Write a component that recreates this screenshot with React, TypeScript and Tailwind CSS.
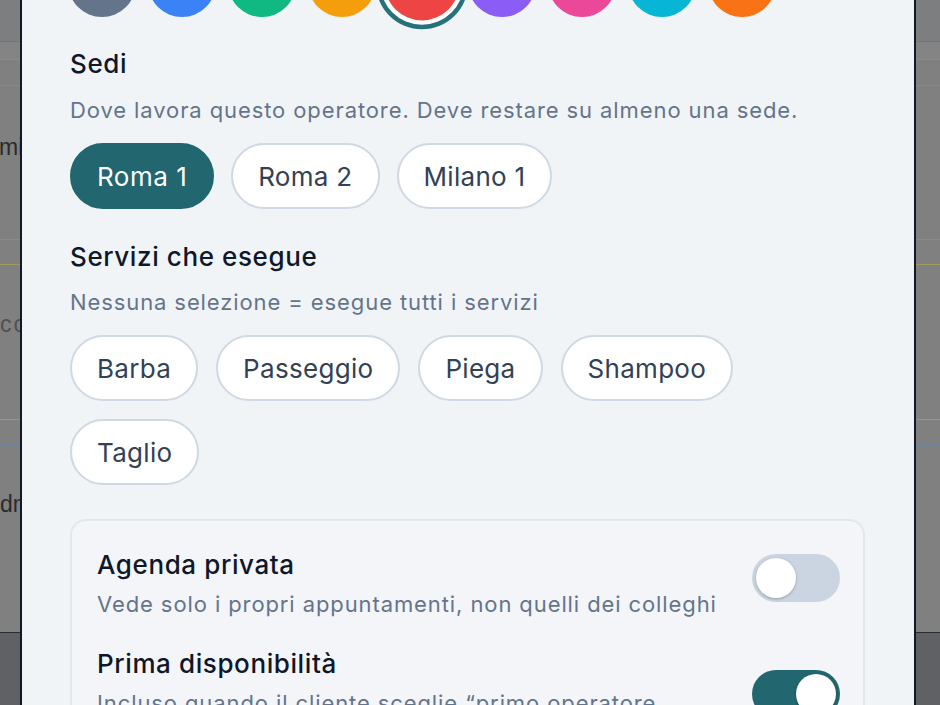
import React from "react";

const swatches = [
  "#64748b",
  "#3b82f6",
  "#10b981",
  "#f59e0b",
  "#ef4444",
  "#8b5cf6",
  "#ec4899",
  "#06b6d4",
  "#f97316",
];

function Pill({ label, active }: { label: string; active?: boolean }) {
  return (
    <button
      className={
        active
          ? "flex h-[66px] items-center rounded-full border-2 border-[#22666f] bg-[#22666f] px-[25px] text-[26px] tracking-[0.5px] text-white"
          : "flex h-[66px] items-center rounded-full border-2 border-[#cfd8e3] bg-white px-[25px] text-[26px] tracking-[0.3px] text-[#334155]"
      }
    >
      {label}
    </button>
  );
}

function Toggle({ on, className }: { on?: boolean; className?: string }) {
  return (
    <div
      className={
        (on
          ? "relative h-[48px] w-[88px] shrink-0 rounded-full bg-[#22666f] "
          : "relative h-[48px] w-[88px] shrink-0 rounded-full bg-[#cbd5e1] ") + (className ?? "")
      }
    >
      <div
        className={
          on
            ? "absolute right-[4px] top-[4px] size-[40px] rounded-full bg-white shadow-[0_1px_3px_rgba(0,0,0,0.25)]"
            : "absolute left-[4px] top-[4px] size-[40px] rounded-full bg-white shadow-[0_1px_3px_rgba(0,0,0,0.25)]"
        }
      />
    </div>
  );
}

export default function App() {
  return (
    <div className="relative h-[705px] w-[940px] overflow-hidden bg-[#808080] font-[Inter,'Noto_Sans',sans-serif]">
      {/* background page under the overlay */}
      <div className="flex h-full flex-col font-['Liberation_Sans',Arial,sans-serif]">
        <div className="h-[41px] shrink-0 bg-[#7d7e80]" />
        <div className="h-px shrink-0 bg-[#70757c]" />
        <div className="h-[17px] shrink-0 bg-[#848484]" />
        <div className="h-px shrink-0 bg-[#8a84a8]" />
        <div className="h-[25px] shrink-0" />
        <div className="h-px shrink-0 bg-[#a97a7c]" />
        <div className="h-[153px] shrink-0 pt-[47px] text-[23px] leading-[28px] text-[#2b2b2b]">
          <span className="-ml-[1px]">mi</span>
        </div>
        <div className="h-px shrink-0 bg-[#a97a7c]" />
        <div className="h-[24px] shrink-0" />
        <div className="h-px shrink-0 bg-[#a39a5e]" />
        <div className="h-[154px] shrink-0 pt-[45px] text-[23px] leading-[28px] tracking-[2px] text-[#505050]">
          <span>cc</span>
        </div>
        <div className="h-px shrink-0 bg-[#a39a5e]" />
        <div className="h-[24px] shrink-0" />
        <div className="h-px shrink-0 bg-[#6f86a0]" />
        <div className="h-[154px] shrink-0 pt-[45px] text-[23px] leading-[28px] text-[#2b2b2b]">
          <span>dm</span>
        </div>
        <div className="h-px shrink-0 bg-[#6f86a0]" />
        <div className="h-[32px] shrink-0" />
        <div className="h-px shrink-0 bg-[#2a2c30]" />
        <div className="flex-1 bg-[#5f6165]" />
      </div>

      {/* modal sheet (overlay) */}
      <div className="absolute inset-y-0 left-[20px] w-[896px] overflow-hidden border-x-2 border-[#121826] bg-[#f1f4f7]">
        <div className="-mt-[51px] px-12">
          <div className="-ml-[2px] flex gap-3">
            {swatches.map((c, i) => (
              <div
                key={c}
                className={
                  i === 4
                    ? "size-[68px] shrink-0 scale-110 rounded-full ring-4 ring-[#27717b] ring-offset-4 ring-offset-white"
                    : "size-[68px] shrink-0 rounded-full"
                }
                style={{ backgroundColor: c }}
              />
            ))}
          </div>

          <h2 className="mt-[31px] text-[26px] font-medium leading-[32px] tracking-[0.6px] text-[#0f172a]">
            Sedi
          </h2>
          <p className="mt-[16px] text-[22px] leading-[28px] tracking-[0.9px] text-[#64748b]">
            Dove lavora questo operatore. Deve restare su almeno una sede.
          </p>
          <div className="mt-[19px] flex flex-wrap gap-[17px]">
            <Pill label="Roma 1" active />
            <Pill label="Roma 2" />
            <Pill label="Milano 1" />
          </div>

          <h2 className="mt-[32px] text-[26px] font-medium leading-[32px] tracking-[0.6px] text-[#0f172a]">
            Servizi che esegue
          </h2>
          <p className="mt-[15px] text-[22px] leading-[28px] tracking-[0.9px] text-[#64748b]">
            Nessuna selezione = esegue tutti i servizi
          </p>
          <div className="mt-[19px] flex w-[700px] flex-wrap gap-x-[18px] gap-y-[18px]">
            <Pill label="Barba" />
            <Pill label="Passeggio" />
            <Pill label="Piega" />
            <Pill label="Shampoo" />
            <Pill label="Taglio" />
          </div>

          <div className="mt-[34px] w-[795px] rounded-[16px] border-2 border-[#e3e7ec] bg-[#f3f5f8] pl-[25px] pr-[23px] pt-[28px]">
            <div className="flex items-start justify-between gap-6">
              <div>
                <div className="text-[26px] font-medium leading-[32px] tracking-[0.6px] text-[#0f172a]">
                  Agenda privata
                </div>
                <div className="mt-[9px] text-[22px] leading-[28px] tracking-[0.9px] text-[#64748b]">
                  Vede solo i propri appuntamenti, non quelli dei colleghi
                </div>
              </div>
              <Toggle className="mt-[5px]" />
            </div>
            <div className="mt-[30px] flex items-start justify-between gap-6">
              <div>
                <div className="text-[26px] font-medium leading-[32px] tracking-[0.6px] text-[#0f172a]">
                  Prima disponibilità
                </div>
                <div className="mt-[9px] text-[22px] leading-[28px] tracking-[0.9px] text-[#64748b]">
                  Incluso quando il cliente sceglie “primo operatore disponibile”
                </div>
              </div>
              <Toggle on className="mt-[22px]" />
            </div>
            <div className="h-[28px]" />
          </div>
        </div>
      </div>
    </div>
  );
}
